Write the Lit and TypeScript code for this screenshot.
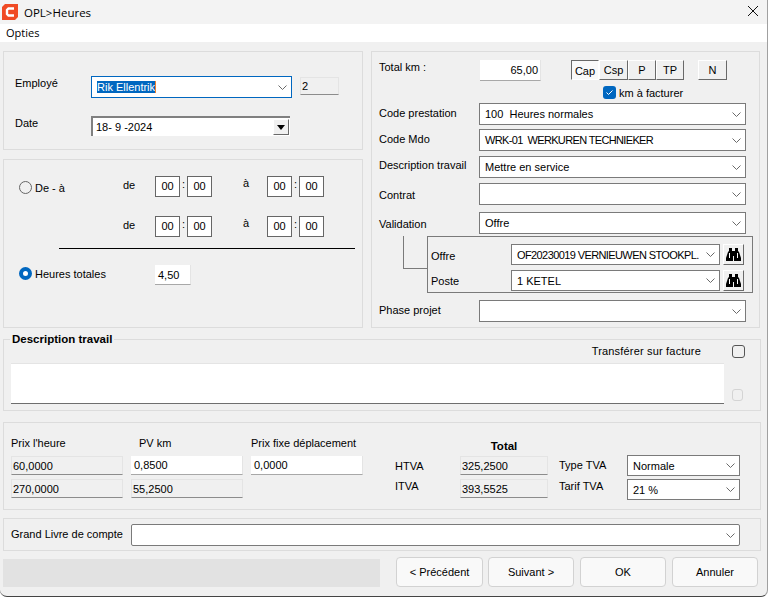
import { LitElement, html, css } from 'lit';
import { customElement } from 'lit/decorators.js';

const chevron = html`<svg class="chev" width="9" height="5" viewBox="0 0 9 5"><path d="M.5.5 4.500 4.500 8.500.5" fill="none" stroke="#6a6a6a"/></svg>`;

const binoculars = html`<svg width="15" height="14" viewBox="0 0 15 14"><path d="M3 0h3v3h3V0h3v3l1 1 1 3 1 3v3H8V8H7v5H0v-3l1-3 1-3 1-1z" fill="#000"/><path d="M3 5h1v5H3zM11 5h1v5h-1z" fill="#fff"/></svg>`;

function combo(text: string, extra = '') {
  return html`<div class="combo ${extra}"><span class="txt">${text}</span>${chevron}</div>`;
}

function timeBox() {
  return html`<div class="time">00</div>`;
}

@customElement('app-root')
export class AppRoot extends LitElement {
  static styles = css`
    :host {
      display: block;
      width: 769px;
      height: 597px;
      background: #fff;
      font: 11px "Liberation Sans", Arial, sans-serif;
      color: #000;
      overflow: hidden;
      white-space: nowrap;
    }
    * { box-sizing: border-box; }

    .window {
      width: 768px;
      height: 597px;
      background: #f0f0f0;
      border-right: 1px solid #a0a0a0;
      border-bottom: 1px solid #444;
      border-radius: 0 0 7px 7px;
      overflow: hidden;
    }

    .titlebar {
      height: 24px;
      display: flex;
      align-items: center;
      padding-left: 2px;
      background: #f3f3f3;
      font: 11.5px "Open Sans", sans-serif;
    }
    .titlebar .name { margin-left: 6px; flex: 1; }
    .titlebar .close { margin: 0 9px 2px 0; display: block; }

    .menubar {
      height: 18px;
      background: #fff;
      padding-left: 6px;
      font: 11px/18px "Open Sans", sans-serif;
    }

    .panel { border: 1px solid #dcdcdc; }

    .top {
      display: grid;
      grid-template-columns: 360px 389px;
      column-gap: 8px;
      margin: 9px 0 0 3px;
      height: 277px;
    }
    .left { display: flex; flex-direction: column; gap: 9px; }

    .who {
      height: 99px;
      padding: 24px 0 0 11px;
      display: grid;
      grid-template-columns: 76px 201px 8px 39px;
      grid-template-rows: 22px 20px;
      row-gap: 18px;
    }
    .who .lbl { padding-top: 1px; }
    .who .num { grid-column: 4; margin-top: 1px; height: 18px; }

    .combo {
      height: 22px;
      display: flex;
      align-items: center;
      justify-content: space-between;
      background: #fff;
      border: 1px solid #7a7a7a;
      padding: 0 5px;
    }
    .combo .txt { white-space: pre; }
    .combo.focus { border-color: #0067c0; }
    .combo.round { border-radius: 2px; }
    .combo.caps .txt { letter-spacing: -0.65px; }
    .combo.tight .txt { letter-spacing: -0.6px; }
    .chev { flex: none; margin-right: -1px; }

    .sel {
      background: #0067c0;
      color: #fff;
      border-right: 1px solid #f08030;
    }

    .date {
      width: 199px;
      height: 20px;
      display: flex;
      align-items: center;
      justify-content: space-between;
      background: #fff;
      border-top: 2px solid #808080;
      border-left: 2px solid #808080;
      padding-left: 3px;
    }
    .date .btn {
      width: 16px;
      height: 16px;
      margin-right: 1px;
      display: flex;
      align-items: center;
      justify-content: center;
      background: #f0f0f0;
      border: 1px solid;
      border-color: #fff #696969 #696969 #fff;
    }
    .date .tri {
      width: 0;
      height: 0;
      border: 4px solid transparent;
      border-top: 5px solid #000;
      border-bottom: 0;
    }

    .ro {
      display: flex;
      align-items: center;
      height: 19px;
      padding-left: 1px;
      background: #f0f0f0;
      border: 1px solid #e4e4e4;
      border-bottom-color: #8c8c8c;
    }
    .edit {
      display: flex;
      align-items: center;
      height: 19px;
      padding-left: 3px;
      background: #fff;
      border-bottom: 1px solid #a8a8a8;
      border-right: 1px solid #e4e4e4;
    }

    .hours {
      flex: 1;
      padding: 16px 0 0 15px;
      display: grid;
      grid-template-columns: 104px 32px 25px 7px 25px 55px 25px 7px 25px;
      grid-template-rows: 40px 32px 17px 20px;
      align-items: start;
    }
    .radio-line { display: flex; align-items: center; gap: 3px; }
    .radio-line.first { height: 23px; }
    .radio-line.second { height: 17px; }
    .radio {
      width: 13px;
      height: 13px;
      border-radius: 50%;
      border: 1px solid #666;
      background: #f0f0f0;
    }
    .radio.on { border: 4px solid #0067c0; background: #fff; }
    .de { line-height: 19px; }
    .time {
      height: 21px;
      border: 1px solid #666;
      background: #fff;
      text-align: center;
      line-height: 18px;
    }
    .colon { text-align: center; line-height: 17px; }
    .to { padding-left: 31px; line-height: 15px; }
    .rule {
      grid-column: 1 / -1;
      height: 1px;
      background: #000;
      margin: 0 -31px 0 40px;
    }
    .hours .total { height: 20px; width: 36px; }
    .hours .total-cell { grid-column: 3 / 6; }

    .right { padding: 8px 0 0 7px; position: relative; }
    .km { height: 43px; }
    .km-row { display: flex; height: 26px; align-items: flex-start; }
    .km-row .lbl { width: 101px; line-height: 14px; }
    .km-row .val { width: 61px; height: 21px; justify-content: flex-end; padding-right: 2px; margin-right: 30px; }
    .tog {
      height: 20px;
      display: flex;
      align-items: center;
      justify-content: center;
      background: #f0f0f0;
      border: 1px solid;
      border-color: #fff #696969 #696969 #fff;
      width: 28px;
    }
    .tog.wide { width: 29px; }
    .tog.last { width: 29px; margin-left: 14px; }
    .tog.pressed {
      border-color: #696969 #fff #fff #696969;
      background: #f9f9f9;
      padding-top: 2px;
    }
    .km-check {
      margin-left: 224px;
      display: flex;
      align-items: center;
      gap: 3px;
    }
    .check {
      width: 13px;
      height: 13px;
      border-radius: 3px;
      flex: none;
      border: 1px solid #555;
    }
    .check.on { background: #0067c0; border: 0; }
    .check svg { display: block; }

    .form {
      display: grid;
      grid-template-columns: 100px 267px;
      grid-template-rows: 26px 27px 27px 29px 24px 64px 22px;
      align-items: start;
    }
    .form .lbl { line-height: 21px; }
    .form .lbl.up { line-height: 19px; }
    .form .lbl.down { padding-top: 2px; }
    .sub {
      grid-column: 1 / -1;
      height: 57px;
      margin-left: 48px;
      width: 326px;
      border: 1px solid #7a7a7a;
      display: grid;
      grid-template-columns: 80px 209px 3px 21px;
      grid-template-rows: 21px 21px;
      row-gap: 5px;
      padding: 7px 0 0 3px;
      align-items: center;
    }
    .sub .combo { height: 21px; }
    .sub .offre { padding-top: 3px; }
    .bino {
      height: 21px;
      grid-column: 4;
      display: flex;
      align-items: center;
      justify-content: center;
      background: #f0f0f0;
      border: 1px solid;
      border-color: #fff #696969 #696969 #fff;
    }
    .link {
      position: absolute;
      left: 31px;
      top: 184px;
      width: 24px;
      height: 33px;
      border-left: 1px solid #7a7a7a;
      border-bottom: 1px solid #7a7a7a;
    }

    .desc {
      position: relative;
      margin: 11px 0 0 3px;
      width: 758px;
      height: 72px;
      padding: 23px 0 0 7px;
    }
    .legend {
      position: absolute;
      left: 6px;
      top: -7px;
      padding: 0 2px;
      background: #f0f0f0;
      font-weight: bold;
      font-size: 11.5px;
    }
    .transfer {
      position: absolute;
      right: 59px;
      top: 5px;
      letter-spacing: 0.18px;
    }
    .transfer-check { position: absolute; left: 728px; top: 5px; }
    .off {
      position: absolute;
      left: 728px;
      top: 49px;
      width: 11px;
      height: 12px;
      border: 1px solid #d4d4d4;
      border-radius: 3px;
    }
    .notes {
      width: 713px;
      height: 41px;
      background: #fff;
      border-bottom: 1px solid #6e6e6e;
      border-top: 1px solid #e4e4e4;
    }

    .prices {
      margin: 11px 0 0 3px;
      width: 758px;
      height: 88px;
      padding: 13px 0 0 7px;
      display: grid;
      grid-template-columns: 112px 8px 112px 8px 112px 32px 65px 88px 11px 68px 113px;
      grid-template-rows: 20px 23px 19px;
      align-items: start;
    }
    .prices .h { line-height: 14px; }
    .prices .pv { padding-left: 8px; }
    .prices .c1 { grid-column: 1; }
    .prices .c3 { grid-column: 3; }
    .prices .c5 { grid-column: 5; }
    .prices .c7 { grid-column: 7; line-height: 20px; }
    .prices .c7.up { line-height: 15px; }
    .prices .c8 { grid-column: 8; }
    .prices .c10 { grid-column: 10; line-height: 19px; }
    .prices .c10.up { line-height: 15px; }
    .prices .c11 { grid-column: 11; }
    .prices .total-h { grid-column: 8; font-weight: bold; font-size: 11.5px; line-height: 20px; text-align: center; }
    .prices .offset { margin-top: -1px; }
    .prices .combo { height: 21px; }

    .gl {
      margin: 8px 0 0 3px;
      width: 758px;
      height: 33px;
      display: grid;
      grid-template-columns: 120px 609px;
      padding: 5px 0 0 7px;
      align-items: start;
      line-height: 20px;
    }

    .footer {
      margin: 6px 0 0 3px;
      display: flex;
      height: 30px;
    }
    .status { background: #e2e2e2; margin-top: 2px; width: 377px; height: 28px; }
    button {
      font: 11px "Liberation Sans", Arial, sans-serif;
      color: #000;
      background: #f9f9f9;
      border: 1px solid #d2d2d2;
      border-radius: 4px;
      padding: 0;
      width: 86px;
      margin-left: 6px;
    }
    .footer .prev { margin-left: 16px; width: 87px; }
    .footer .next { margin-left: 5px; }
  `;

  render() {
    return html`
      <div class="window">
        <div class="titlebar">
          <svg width="16" height="16" viewBox="0 0 16 16">
            <path d="M3 0h13v13l-3 3H0V3z" fill="#f04a24"/>
            <path d="M12 4.500H6.500L5 6v4l1.500 1.500H12" fill="none" stroke="#fff" stroke-width="2.400"/>
          </svg>
          <span class="name">OPL&gt;Heures</span>
          <svg class="close" width="10" height="10" viewBox="0 0 10 10"><path d="M0 0l10 10M10 0 0 10" stroke="#111" fill="none"/></svg>
        </div>
        <div class="menubar">Opties</div>

        <div class="top">
          <div class="left">
            <div class="panel who">
              <div class="lbl">Employé</div>
              <div class="combo focus"><span class="sel">Rik Ellentrik</span>${chevron}</div>
              <div></div>
              <div class="ro num">2</div>
              <div class="lbl">Date</div>
              <div class="date"><span>18- 9 -2024</span><div class="btn"><div class="tri"></div></div></div>
            </div>

            <div class="panel hours">
              <div class="radio-line first"><div class="radio"></div>De - à</div>
              <div class="de">de</div>
              ${timeBox()}<div class="colon">:</div>${timeBox()}
              <div class="to">à</div>
              ${timeBox()}<div class="colon">:</div>${timeBox()}

              <div></div>
              <div class="de">de</div>
              ${timeBox()}<div class="colon">:</div>${timeBox()}
              <div class="to">à</div>
              ${timeBox()}<div class="colon">:</div>${timeBox()}

              <div class="rule"></div>

              <div class="radio-line second"><div class="radio on"></div>Heures totales</div>
              <div></div>
              <div class="total-cell"><div class="edit total">4,50</div></div>
            </div>
          </div>

          <div class="panel right">
            <div class="km">
              <div class="km-row">
                <div class="lbl">Total km :</div>
                <div class="edit val">65,00</div>
                <div class="tog pressed">Cap</div>
                <div class="tog wide">Csp</div>
                <div class="tog">P</div>
                <div class="tog">TP</div>
                <div class="tog last">N</div>
              </div>
              <div class="km-check">
                <div class="check on"><svg width="13" height="13" viewBox="0 0 13 13"><path d="M3.500 6.500l2 2 4-4" fill="none" stroke="#fff"/></svg></div>
                km à facturer
              </div>
            </div>
            <div class="form">
              <div class="lbl">Code prestation</div>${combo('100  Heures normales')}
              <div class="lbl">Code Mdo</div>${combo('WRK-01  WERKUREN TECHNIEKER', 'caps')}
              <div class="lbl up">Description travail</div>${combo('Mettre en service')}
              <div class="lbl down">Contrat</div>${combo('')}
              <div class="lbl down">Validation</div>${combo('Offre')}
              <div class="sub">
                <div class="offre">Offre</div>${combo('OF20230019 VERNIEUWEN STOOKPL.', 'tight')}<div class="bino">${binoculars}</div>
                <div>Poste</div>${combo('1 KETEL')}<div class="bino">${binoculars}</div>
              </div>
              <div class="lbl">Phase projet</div>${combo('')}
            </div>
            <div class="link"></div>
          </div>
        </div>

        <div class="panel desc">
          <div class="legend">Description travail</div>
          <div class="transfer">Transférer sur facture</div>
          <div class="check transfer-check"></div>
          <div class="notes"></div>
          <div class="off"></div>
        </div>

        <div class="panel prices">
          <div class="c1 h">Prix l'heure</div>
          <div class="c3 h pv">PV km</div>
          <div class="c5 h">Prix fixe déplacement</div>
          <div class="total-h">Total</div>

          <div class="ro c1">60,0000</div>
          <div class="edit c3">0,8500</div>
          <div class="edit c5">0,0000</div>
          <div class="c7">HTVA</div>
          <div class="ro c8">325,2500</div>
          <div class="c10">Type TVA</div>
          <div class="c11 offset">${combo('Normale')}</div>

          <div class="ro c1">270,0000</div>
          <div class="ro c3">55,2500</div>
          <div class="c7 up">ITVA</div>
          <div class="ro c8">393,5525</div>
          <div class="c10 up">Tarif TVA</div>
          <div class="c11">${combo('21 %')}</div>
        </div>

        <div class="panel gl">
          <div>Grand Livre de compte</div>
          ${combo('', 'round')}
        </div>

        <div class="footer">
          <div class="status"></div>
          <button class="prev">&lt; Précédent</button>
          <button class="next">Suivant &gt;</button>
          <button>OK</button>
          <button>Annuler</button>
        </div>
      </div>
    `;
  }
}
